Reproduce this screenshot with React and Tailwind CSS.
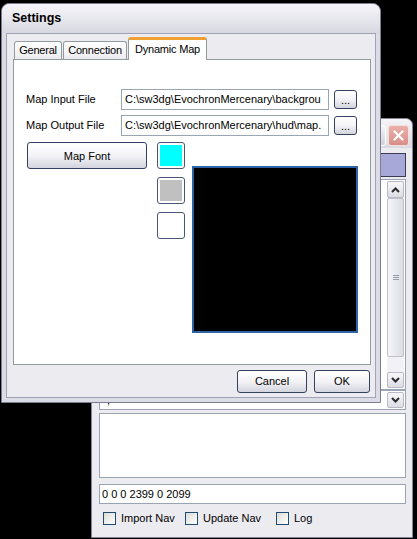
const XpButton = ({ className = "", children }) => (
  <div
    className={`flex items-center justify-center rounded-[3px] border border-[#34425e] bg-linear-to-b from-white via-[#f3f3f7] to-[#d4d4de] text-[11px] text-black ${className}`}
  >
    {children}
  </div>
);

const Chevron = ({ up }) => (
  <svg width="9" height="6" viewBox="0 0 9 6">
    <polyline
      points={up ? "1,5 4.5,1.5 8,5" : "1,1 4.5,4.5 8,1"}
      fill="none"
      stroke="#2b2b2b"
      strokeWidth="2"
    />
  </svg>
);

const ScrollBtn = ({ up, className = "" }) => (
  <div
    className={`flex items-center justify-center rounded-[2px] border border-[#b9b9c9] bg-linear-to-b from-[#f8f8fb] to-[#dcdce6] ${className}`}
  >
    <Chevron up={up} />
  </div>
);

const Checkbox = ({ label, width }) => (
  <div className="flex items-center gap-[3px]" style={{ width }}>
    <div className="h-[13px] w-[13px] border border-[#1f4a74] bg-linear-to-br from-[#dcdcd6] to-white" />
    <span className="pl-[2px] text-[11px] text-black">{label}</span>
  </div>
);

const Tab = ({ children, active, className = "" }) =>
  active ? (
    <div className={`relative z-10 -mb-px flex h-[23px] items-start justify-center rounded-t-[3px] border border-b-0 border-[#919b9c] border-t-[3px] border-t-[#f0a030] bg-white pt-[1px] text-[11px] tracking-[-0.2px] text-black ${className}`}>
      {children}
    </div>
  ) : (
    <div className={`flex h-[18px] items-center justify-center rounded-t-[3px] border border-b-0 border-[#919b9c] bg-linear-to-b from-white to-[#ececf0] text-[11px] tracking-[-0.2px] text-black ${className}`}>
      {children}
    </div>
  );

const PathField = ({ label, value }) => (
  <div className="flex items-center pl-[12px]">
    <span className="w-[95px] text-[11px] text-black">{label}</span>
    <div className="flex h-[21px] w-[208px] items-center overflow-hidden whitespace-nowrap border border-[#9aa5b4] bg-white pl-[3px] text-[11px] text-black">
      {value}
    </div>
    <XpButton className="ml-[5px] h-[19px] w-[23px] items-end pb-[2px] text-[9px] leading-none">
      ...
    </XpButton>
  </div>
);

const Swatch = ({ color }) => (
  <div className="h-[27px] w-[28px] rounded-[3px] border border-[#4a5676] bg-white p-[2px]">
    <div className={`h-full w-full ${color}`} />
  </div>
);

export default function App() {
  return (
    <div className="relative h-[539px] w-[417px] overflow-hidden bg-black font-['Liberation_Sans',sans-serif]">
      {/* background window */}
      <div className="absolute left-[91px] top-[118px] flex h-[420px] w-[322px] flex-col rounded-t-[7px] border border-[#85859a] bg-[#e4e4ec]">
        <div className="flex h-[29px] shrink-0 items-start justify-end gap-[2px] rounded-t-[7px] bg-linear-to-b from-[#f5f5f8] to-[#d9d9e2] pr-[3px] pt-[6px]">
          <div className="h-[21px] w-[21px] rounded-[3px] border border-white bg-linear-to-b from-[#f4f4f8] to-[#d0d0dc]" />
          <div className="flex h-[21px] w-[21px] items-center justify-center rounded-[3px] border border-[#f6dede] bg-linear-to-b from-[#eab0aa] to-[#d88e88]">
            <svg width="11" height="11" viewBox="0 0 11 11">
              <path d="M1.5 1.5 L9.5 9.5 M9.5 1.5 L1.5 9.5" stroke="white" strokeWidth="2.2" strokeLinecap="round" />
            </svg>
          </div>
        </div>
        <div className="flex flex-1 flex-col bg-[#ecebf0] pl-[7px] pr-[6px]">
          <div className="mt-[5px] h-[24px] border border-[#3a3a52] bg-[#a8a8d8]" />
          <div className="mt-[2px] flex h-[211px] justify-end border border-[#9aa5b4] bg-white p-px">
            <div className="flex w-[17px] flex-col bg-[#f2f2f6]">
              <ScrollBtn up className="h-[17px]" />
              <div className="flex h-[159px] items-center justify-center rounded-[2px] border border-[#c0c0cc] bg-linear-to-r from-[#f6f6fa] to-[#dcdce6]">
                <div className="flex flex-col gap-px">
                  <div className="h-px w-[6px] bg-[#9a9aa8]" />
                  <div className="h-px w-[6px] bg-[#9a9aa8]" />
                  <div className="h-px w-[6px] bg-[#9a9aa8]" />
                </div>
              </div>
              <div className="flex-1" />
              <ScrollBtn className="h-[16px]" />
            </div>
          </div>
          <div className="flex h-[20px] items-center justify-between border border-[#9aa5b4] bg-white p-px">
            <span className="pl-[6px] text-[11px] leading-none text-black">,</span>
            <ScrollBtn className="h-[16px] w-[17px]" />
          </div>
          <div className="mt-[3px] h-[65px] border border-[#9aa5b4] bg-white" />
          <div className="mt-[6px] flex h-[20px] items-center border border-[#9aa5b4] bg-white pl-[2px] text-[11px] text-black">
            0 0 0 2399 0 2099
          </div>
          <div className="mt-[6px] flex pl-[4px]">
            <Checkbox label="Import Nav" width="82px" />
            <Checkbox label="Update Nav" width="91px" />
            <Checkbox label="Log" width="60px" />
          </div>
        </div>
      </div>

      {/* settings dialog */}
      <div className="absolute left-[1px] top-[3px] flex h-[400px] w-[380px] flex-col rounded-t-[8px] border border-[#7c7c8e] bg-[#dcdce6]">
        <div className="flex h-[29px] shrink-0 items-center rounded-t-[8px] bg-linear-to-b from-[#f6f6f9] to-[#d8d8e2] pl-[10px] text-[12.5px] font-bold text-black">
          Settings
        </div>
        <div className="mx-[4px] mb-[4px] flex flex-1 flex-col border border-[#a2a2b6] bg-[#ecebf0] pt-[3px]">
          <div className="flex items-end gap-[1px] pl-[7px]">
            <Tab className="w-[48px]">General</Tab>
            <Tab className="w-[64px]">Connection</Tab>
            <Tab active className="w-[79px]">Dynamic Map</Tab>
          </div>
          <div className="ml-[6px] flex h-[306px] w-[358px] flex-col border border-[#919b9c] bg-white">
            <div className="mt-[29px]">
              <PathField label="Map Input File" value={"C:\\sw3dg\\EvochronMercenary\\backgrou"} />
            </div>
            <div className="mt-[5px]">
              <PathField label="Map Output File" value={"C:\\sw3dg\\EvochronMercenary\\hud\\map."} />
            </div>
            <div className="mt-[6px] flex items-start pl-[13px]">
              <XpButton className="h-[27px] w-[120px] items-start pt-[5px]">Map Font</XpButton>
              <div className="ml-[10px] flex flex-col gap-[8px]">
                <Swatch color="bg-[#00ffff]" />
                <Swatch color="bg-[#c0c0c0]" />
                <Swatch color="bg-white" />
              </div>
              <div className="ml-[7px] mt-[24px] h-[167px] w-[166px] border-2 border-[#2c64a6] bg-black" />
            </div>
          </div>
          <div className="mt-[5px] flex justify-end gap-[7px] pr-[5px]">
            <XpButton className="h-[23px] w-[70px]">Cancel</XpButton>
            <XpButton className="h-[23px] w-[56px]">OK</XpButton>
          </div>
        </div>
      </div>
    </div>
  );
}
